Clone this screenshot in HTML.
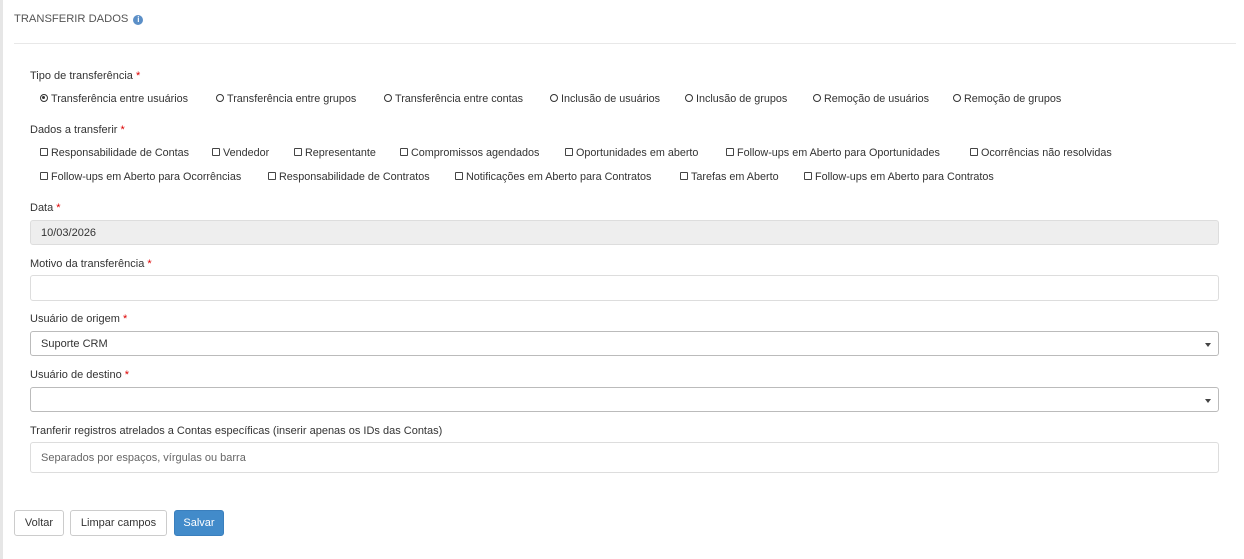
<!DOCTYPE html>
<html><head><meta charset="utf-8"><style>
*{box-sizing:border-box;margin:0;padding:0}
body{width:1244px;height:559px;background:#fff;font-family:"Liberation Sans",sans-serif;color:#333;font-size:11px;position:relative;overflow:hidden}
.strip{position:absolute;left:0;top:0;width:3px;height:559px;background:#e6e6e6}
.a{position:absolute;white-space:nowrap}
.h{left:14px;top:13px;font-size:11.2px;color:#555}
.info{display:inline-block;width:10px;height:10px;border-radius:50%;background:#5b8fc7;color:#fff;font-size:8px;font-weight:bold;text-align:center;line-height:10px;vertical-align:0px;margin-left:5px}
.hr{position:absolute;left:14px;top:43px;width:1222px;height:1px;background:#e8e8e8}
.lbl{left:30px;font-size:11px}
.req{color:#d00}
.it{font-size:10.8px}
.r{display:inline-block;width:8px;height:8px;border:1.6px solid #333;border-radius:50%;margin-right:3px;vertical-align:-0px;position:relative}
.r.on::after{content:"";position:absolute;left:1px;top:1px;width:3px;height:3px;border-radius:50%;background:#333}
.c{display:inline-block;width:8px;height:8px;border:1px solid #444;border-radius:1px;margin-right:3px;vertical-align:0px}
.inp{position:absolute;left:30px;width:1189px;border:1px solid #ddd;border-radius:3px;background:#fff;font-size:11px;padding-left:10px}
.sel{border-color:#bbb}
.car{position:absolute;right:7px;top:11px;width:0;height:0;border-left:3.5px solid transparent;border-right:3.5px solid transparent;border-top:4px solid #444}
.btn{position:absolute;top:510px;height:26px;border:1px solid #ccc;border-radius:3px;font-size:11px;line-height:25px;text-align:center;color:#333;background:#fff}
</style></head><body>
<div class="strip"></div>
<div class="a h">TRANSFERIR DADOS<span class="info">i</span></div>
<div class="hr"></div>

<div class="a lbl" style="top:70px">Tipo de transferência <span class="req">*</span></div>
<div class="a it" style="left:40px;top:93px"><span class="r on"></span>Transferência entre usuários</div>
<div class="a it" style="left:216px;top:93px"><span class="r"></span>Transferência entre grupos</div>
<div class="a it" style="left:384px;top:93px"><span class="r"></span>Transferência entre contas</div>
<div class="a it" style="left:550px;top:93px"><span class="r"></span>Inclusão de usuários</div>
<div class="a it" style="left:685px;top:93px"><span class="r"></span>Inclusão de grupos</div>
<div class="a it" style="left:813px;top:93px"><span class="r"></span>Remoção de usuários</div>
<div class="a it" style="left:953px;top:93px"><span class="r"></span>Remoção de grupos</div>

<div class="a lbl" style="top:124px">Dados a transferir <span class="req">*</span></div>
<div class="a it" style="left:40px;top:147px"><span class="c"></span>Responsabilidade de Contas</div>
<div class="a it" style="left:212px;top:147px"><span class="c"></span>Vendedor</div>
<div class="a it" style="left:294px;top:147px"><span class="c"></span>Representante</div>
<div class="a it" style="left:400px;top:147px"><span class="c"></span>Compromissos agendados</div>
<div class="a it" style="left:565px;top:147px"><span class="c"></span>Oportunidades em aberto</div>
<div class="a it" style="left:726px;top:147px"><span class="c"></span>Follow-ups em Aberto para Oportunidades</div>
<div class="a it" style="left:970px;top:147px"><span class="c"></span>Ocorrências não resolvidas</div>
<div class="a it" style="left:40px;top:171px"><span class="c"></span>Follow-ups em Aberto para Ocorrências</div>
<div class="a it" style="left:268px;top:171px"><span class="c"></span>Responsabilidade de Contratos</div>
<div class="a it" style="left:455px;top:171px"><span class="c"></span>Notificações em Aberto para Contratos</div>
<div class="a it" style="left:680px;top:171px"><span class="c"></span>Tarefas em Aberto</div>
<div class="a it" style="left:804px;top:171px"><span class="c"></span>Follow-ups em Aberto para Contratos</div>

<div class="a lbl" style="top:202px">Data <span class="req">*</span></div>
<div class="inp" style="top:220px;height:25px;background:#eee;line-height:24px">10/03/2026</div>

<div class="a lbl" style="top:258px">Motivo da transferência <span class="req">*</span></div>
<div class="inp" style="top:275px;height:26px"></div>

<div class="a lbl" style="top:313px">Usuário de origem <span class="req">*</span></div>
<div class="inp sel" style="top:331px;height:25px;line-height:24px">Suporte CRM<span class="car"></span></div>

<div class="a lbl" style="top:369px">Usuário de destino <span class="req">*</span></div>
<div class="inp sel" style="top:387px;height:25px"><span class="car"></span></div>

<div class="a lbl" style="top:425px">Tranferir registros atrelados a Contas específicas (inserir apenas os IDs das Contas)</div>
<div class="inp" style="top:442px;height:31px;line-height:30px;color:#666">Separados por espaços, vírgulas ou barra</div>

<div class="btn" style="left:14px;width:50px">Voltar</div>
<div class="btn" style="left:70px;width:97px">Limpar campos</div>
<div class="btn" style="left:174px;width:50px;background:#428bca;border-color:#3a7fbd;color:#fff">Salvar</div>
</body></html>
